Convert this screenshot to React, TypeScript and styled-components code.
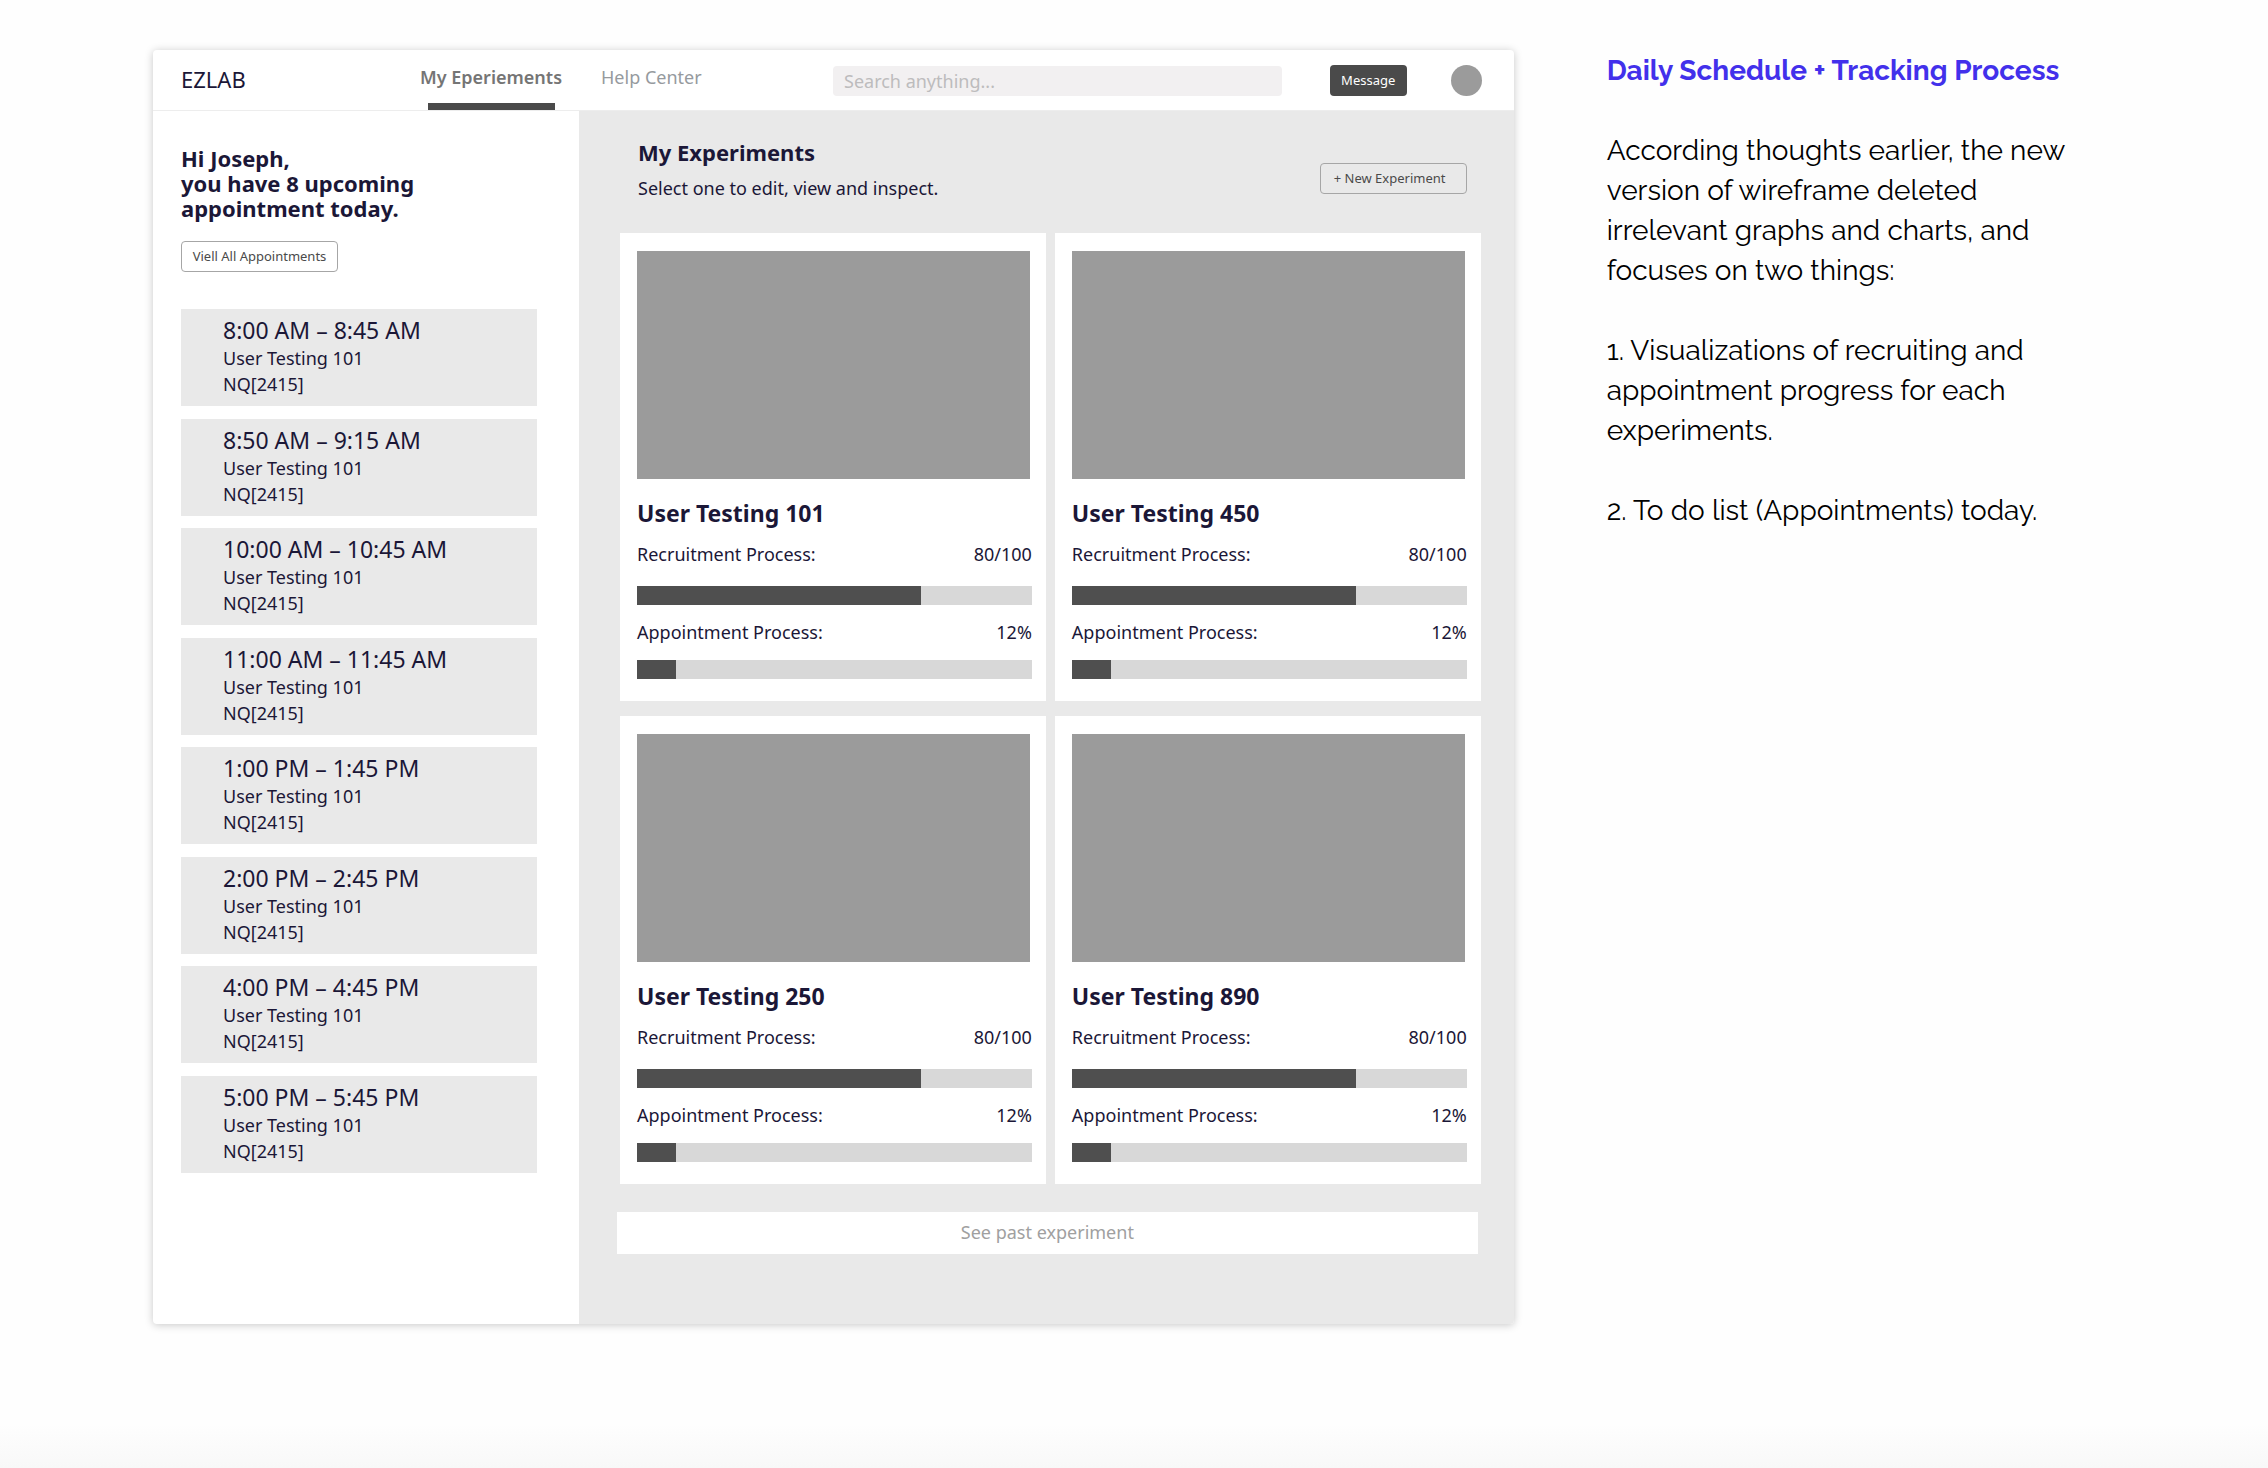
import React from "react";
import styled, { createGlobalStyle } from "styled-components";

const ink = "#1b1737";

const GlobalStyle = createGlobalStyle`
  *, *::before, *::after { box-sizing: border-box; }
  body {
    margin: 0;
    background: #fefefe;
    color: ${ink};
    font-family: "Noto Sans", "Open Sans", sans-serif;
  }
  h1, h2, h3, p, ul { margin: 0; padding: 0; }
  ul { list-style: none; }
  button, input { font-family: inherit; }
`;

const Page = styled.div`
  display: grid;
  grid-template-columns: minmax(0, 1360fr) minmax(0, 508fr);
  column-gap: 93px;
  align-items: start;
  min-height: 100vh;
  padding: 50px 153px 144px;
  background: linear-gradient(to top, #f8f8f8, #fefefe 44px);
`;

const Frame = styled.div`
  border-radius: 4px;
  background: #fff;
  box-shadow: 0 1px 9px rgba(0, 0, 0, 0.22);
  overflow: hidden;
`;

const TopBar = styled.header`
  display: flex;
  align-items: center;
  height: 61px;
  padding: 0 32px 0 28px;
  border-bottom: 1px solid #ededed;
`;

const Logo = styled.span`
  width: 239px;
  padding-bottom: 2px;
  font-size: 22px;
  line-height: 30px;
`;

const Nav = styled.nav`
  display: flex;
  gap: 39px;
  align-self: stretch;
  width: 413px;
`;

const NavLink = styled.a<{ $active?: boolean }>`
  position: relative;
  display: flex;
  align-items: center;
  padding-bottom: 6px;
  font-size: 18px;
  font-weight: ${(p) => (p.$active ? 600 : 400)};
  color: ${(p) => (p.$active ? "#757575" : "#969a9e")};
  text-decoration: none;
  white-space: nowrap;

  &::after {
    content: "";
    display: ${(p) => (p.$active ? "block" : "none")};
    position: absolute;
    right: 7px;
    bottom: 0;
    left: 8px;
    height: 7px;
    background: #4a4a4a;
  }
`;

const Search = styled.input`
  flex: 1;
  min-width: 0;
  height: 30px;
  margin-top: 2px;
  padding: 0 11px;
  border: 0;
  border-radius: 4px;
  background: #f2f0f1;
  color: ${ink};
  font-size: 18px;

  &::placeholder { color: #bdbcbd; opacity: 1; }
`;

const MessageButton = styled.button`
  width: 77px;
  height: 31px;
  margin: 0 44px 0 48px;
  padding: 0;
  border: 0;
  border-radius: 4px;
  background: #4a4a4a;
  color: #fff;
  font-size: 13px;
`;

const Avatar = styled.span`
  width: 31px;
  height: 31px;
  border-radius: 50%;
  background: #9b9b9b;
`;

const Body = styled.div`
  display: grid;
  grid-template-columns: 426px minmax(0, 1fr);
`;

const Sidebar = styled.aside`
  display: flex;
  flex-direction: column;
  align-items: flex-start;
  padding: 35px 42px 151px 28px;
`;

const Greeting = styled.h2`
  font-size: 22px;
  font-weight: 700;
  line-height: 25px;
`;

const OutlineButton = styled.button`
  height: 31px;
  padding: 0 13px 2px;
  border: 1px solid #a6a6a6;
  border-radius: 4px;
  background: transparent;
  color: #4a4a4a;
  font-size: 13px;
  white-space: nowrap;
`;

const ViewAll = styled(OutlineButton)`
  width: 157px;
  margin: 20px 0 37px;
  padding: 0 0 2px;
`;

const NewExperiment = styled(OutlineButton)`
  width: 147px;
  margin-bottom: 7px;
  text-align: left;
`;

const Appointments = styled.ul`
  display: flex;
  flex: 1;
  flex-direction: column;
  justify-content: space-between;
  width: 100%;
`;

const Appointment = styled.li`
  padding: 6px 42px 9px;
  background: #e9e9e9;
`;

const Time = styled.p`
  font-size: 23px;
  line-height: 30px;
`;

const Text = styled.p`
  font-size: 18px;
  line-height: 26px;
`;

const Main = styled.main`
  padding: 27px 33px 70px 38px;
  background: #e9e9e9;
`;

const MainHeader = styled.div`
  display: flex;
  align-items: flex-end;
  justify-content: space-between;
  margin-bottom: 32px;
  padding: 0 14px 0 21px;
`;

const Title = styled.h1`
  margin-bottom: 9px;
  font-size: 22px;
  font-weight: 700;
  line-height: 28px;
`;

const Cards = styled.div`
  display: grid;
  grid-template-columns: repeat(2, minmax(0, 1fr));
  gap: 15px 9px;
  padding-left: 3px;
`;

const Card = styled.article`
  padding: 18px 14px 22px 17px;
  background: #fff;
`;

const Thumbnail = styled.div`
  height: 228px;
  margin: 0 2px 19px 0;
  background: #9b9b9b;
`;

const CardTitle = styled.h3`
  margin-bottom: 13px;
  font-size: 23px;
  font-weight: 700;
  line-height: 30px;
`;

const Row = styled.div<{ $gap: number }>`
  display: flex;
  justify-content: space-between;
  margin-bottom: ${(p) => p.$gap}px;
  font-size: 18px;
  line-height: 26px;
`;

const Bar = styled.progress`
  display: block;
  width: 100%;
  height: 19px;
  border: 0;
  appearance: none;
  background: #d8d8d8;

  &::-webkit-progress-bar { background: #d8d8d8; }
  &::-webkit-progress-value { background: #4f4f4f; }

  & + ${Row} { margin-top: 14px; }
`;

const PastButton = styled.button`
  display: block;
  width: calc(100% - 3px);
  height: 42px;
  margin-top: 28px;
  padding: 0 0 2px;
  border: 0;
  background: #fff;
  color: #a0a0a0;
  font-size: 18px;
`;

const Notes = styled.section`
  max-width: 476px;
  padding-top: 1px;
  font-family: Raleway, Lato, sans-serif;
  font-size: 28px;
  line-height: 40px;
  color: #000;
`;

const NotesTitle = styled.h2`
  color: #4230eb;
  font-size: 28px;
  font-weight: 700;
`;

const NotesText = styled.p`
  margin-top: 40px;
`;

const times = [
  "8:00 AM – 8:45 AM",
  "8:50 AM – 9:15 AM",
  "10:00 AM – 10:45 AM",
  "11:00 AM – 11:45 AM",
  "1:00 PM – 1:45 PM",
  "2:00 PM – 2:45 PM",
  "4:00 PM – 4:45 PM",
  "5:00 PM – 5:45 PM",
];

const experiments = ["101", "450", "250", "890"];

function ExperimentCard({ id }: { id: string }) {
  return (
    <Card>
      <Thumbnail />
      <CardTitle>User Testing {id}</CardTitle>
      <Row $gap={19}>
        <label htmlFor={`recruitment-${id}`}>Recruitment Process:</label>
        <span>80/100</span>
      </Row>
      <Bar id={`recruitment-${id}`} max={100} value={72} />
      <Row $gap={15}>
        <label htmlFor={`appointment-${id}`}>Appointment Process:</label>
        <span>12%</span>
      </Row>
      <Bar id={`appointment-${id}`} max={100} value={10} />
    </Card>
  );
}

export default function App() {
  return (
    <>
      <GlobalStyle />
      <Page>
        <Frame>
          <TopBar>
            <Logo>EZLAB</Logo>
            <Nav>
              <NavLink href="#experiments" $active>My Eperiements</NavLink>
              <NavLink href="#help">Help Center</NavLink>
            </Nav>
            <Search type="search" aria-label="Search" placeholder="Search anything..." />
            <MessageButton>Message</MessageButton>
            <Avatar />
          </TopBar>
          <Body>
            <Sidebar>
              <Greeting>
                Hi Joseph,
                <br />
                you have 8 upcoming
                <br />
                appointment today.
              </Greeting>
              <ViewAll>Viell All Appointments</ViewAll>
              <Appointments>
                {times.map((time) => (
                  <Appointment key={time}>
                    <Time>{time}</Time>
                    <Text>User Testing 101</Text>
                    <Text>NQ[2415]</Text>
                  </Appointment>
                ))}
              </Appointments>
            </Sidebar>
            <Main id="experiments">
              <MainHeader>
                <div>
                  <Title>My Experiments</Title>
                  <Text>Select one to edit, view and inspect.</Text>
                </div>
                <NewExperiment>+ New Experiment</NewExperiment>
              </MainHeader>
              <Cards>
                {experiments.map((id) => (
                  <ExperimentCard key={id} id={id} />
                ))}
              </Cards>
              <PastButton>See past experiment</PastButton>
            </Main>
          </Body>
        </Frame>
        <Notes>
          <NotesTitle>Daily Schedule + Tracking Process</NotesTitle>
          <NotesText>
            According thoughts earlier, the new version of wireframe deleted irrelevant graphs and
            charts, and focuses on two things:
          </NotesText>
          <NotesText>
            1. Visualizations of recruiting and appointment progress for each experiments.
          </NotesText>
          <NotesText>2. To do list (Appointments) today.</NotesText>
        </Notes>
      </Page>
    </>
  );
}
